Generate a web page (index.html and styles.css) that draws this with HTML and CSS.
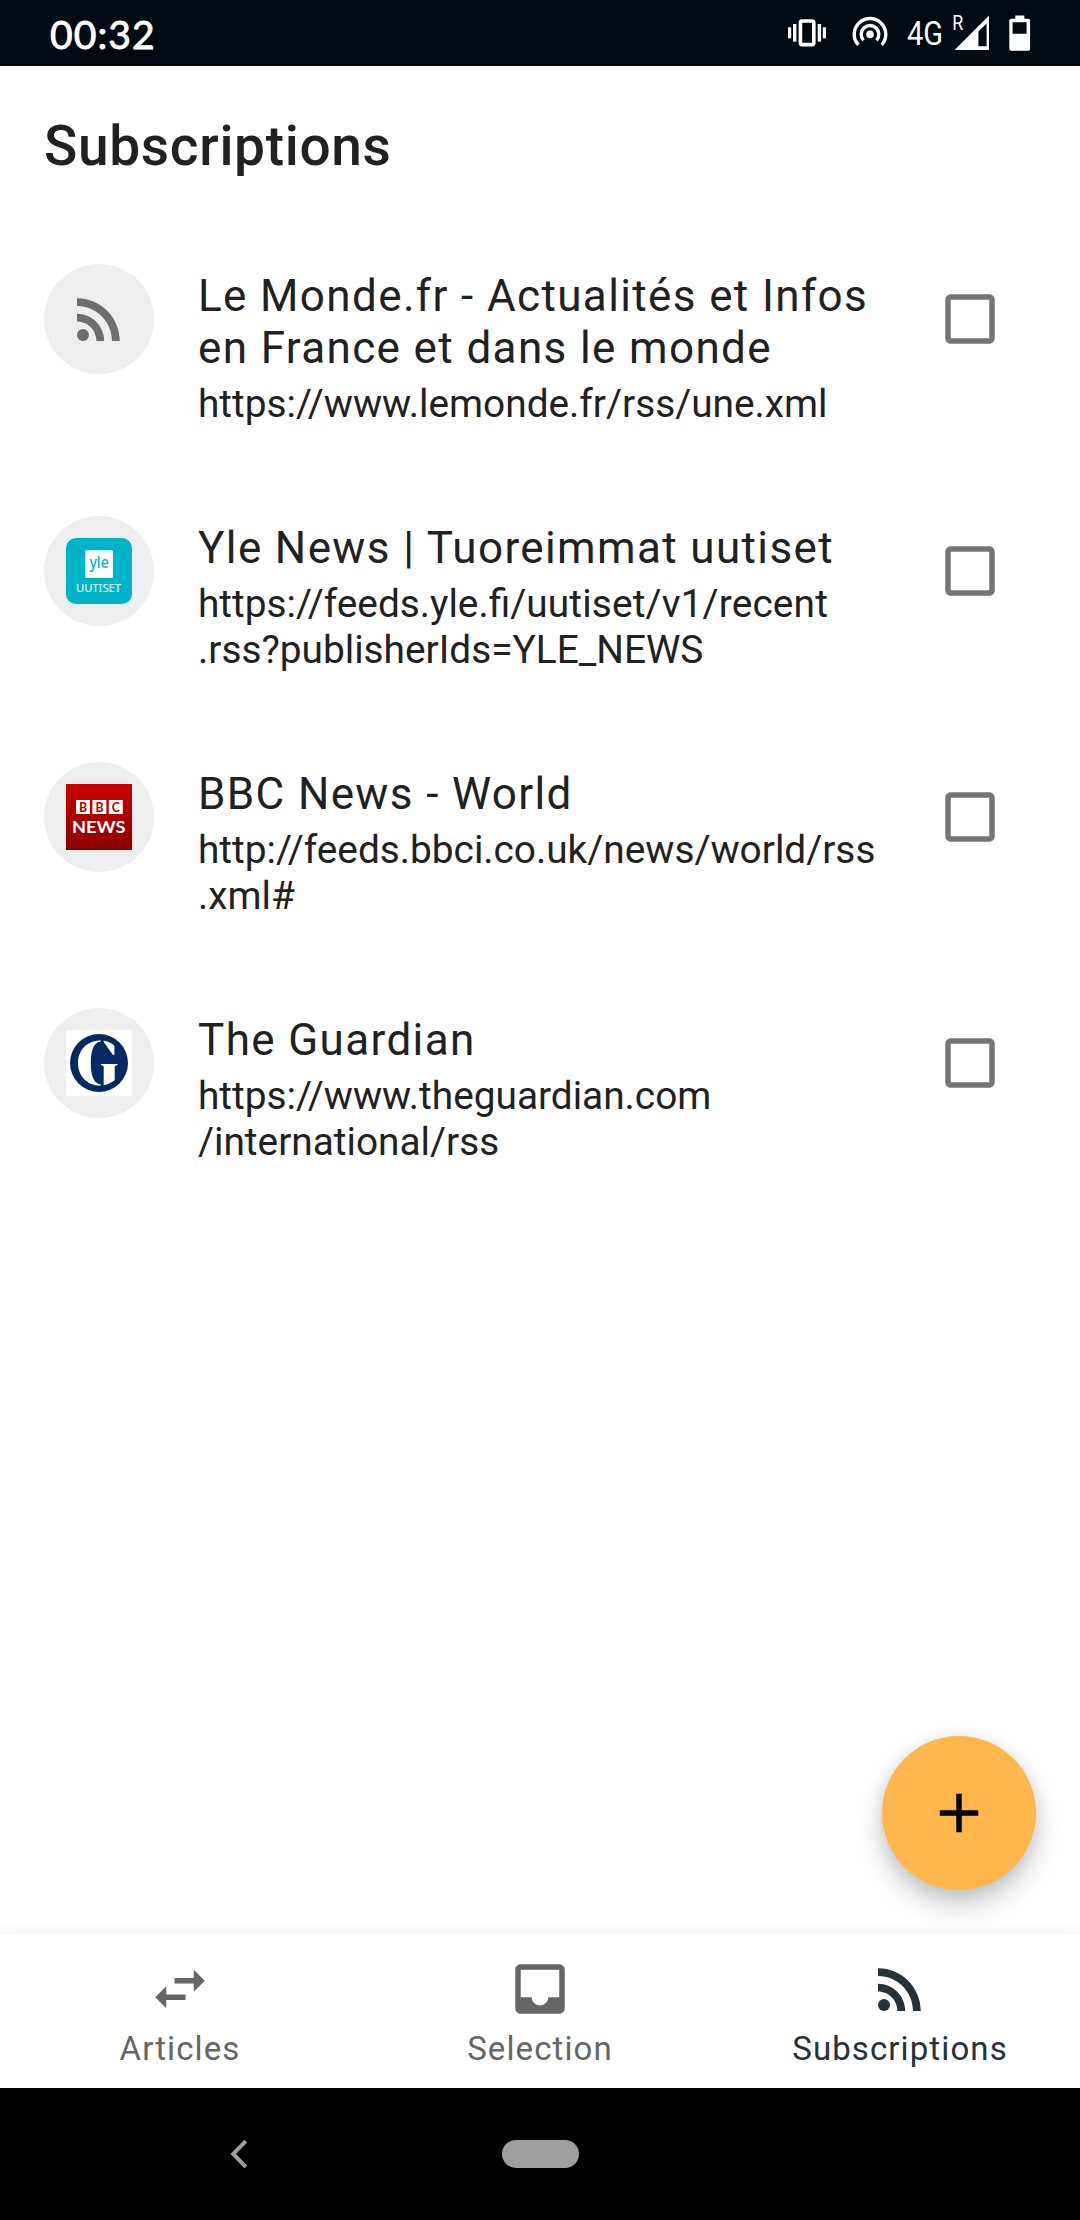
FILE: index.html
```html
<!DOCTYPE html>
<html lang="en">
<head>
<meta charset="utf-8">
<title>Subscriptions</title>
<link rel="stylesheet" href="styles.css">
</head>
<body>
<svg class="symbols" width="0" height="0">
  <symbol id="rss" viewBox="0 0 24 24">
    <circle cx="6.18" cy="17.82" r="2.18"/>
    <path d="M4 4.44v2.83c7.03 0 12.73 5.7 12.73 12.73h2.83c0-8.59-6.97-15.56-15.56-15.56zm0 5.66v2.83c3.9 0 7.07 3.17 7.07 7.07h2.83c0-5.47-4.43-9.9-9.9-9.9z"/>
  </symbol>
  <symbol id="checkbox" viewBox="0 0 24 24">
    <path d="M19 5v14H5V5h14m0-2H5c-1.1 0-2 .9-2 2v14c0 1.1.9 2 2 2h14c1.1 0 2-.9 2-2V5c0-1.1-.9-2-2-2z"/>
  </symbol>
</svg>
<div class="screen">
  <header class="status-bar">
    <span class="clock">00:32</span>
    <svg class="status-icons" width="250" height="66" viewBox="784 0 250 66">
      <g fill="#fff">
        <rect x="800.4" y="21" width="13.4" height="23.6" rx="1.6" fill="none" stroke="#fff" stroke-width="3.6"/>
        <rect x="788" y="27.3" width="3.2" height="11"/>
        <rect x="793" y="24" width="3.4" height="17.6"/>
        <rect x="817.7" y="24" width="3.4" height="17.6"/>
        <rect x="822.8" y="27.3" width="3.2" height="11"/>
        <circle cx="870" cy="34.4" r="3.8"/>
        <path d="M863.5 40.3a8.8 8.8 0 1 1 13 0M858.3 44.9a15.8 15.8 0 1 1 23.4 0" fill="none" stroke="#fff" stroke-width="3.4"/>
        <text class="network" x="907" y="44.6" font-size="34" textLength="36" lengthAdjust="spacingAndGlyphs">4G</text>
        <text class="network" x="952.3" y="30" font-size="21" textLength="11" lengthAdjust="spacingAndGlyphs">R</text>
        <path fill-rule="evenodd" d="M954.5 50L989 15.5V50zM978.4 46.3H986.6V23.6L978.4 31.5z"/>
        <path fill-rule="evenodd" d="M1015.3 15.4h9v3.3h3.9q1.9 0 1.9 1.9v28.2q0 1.9-1.9 1.9h-17q-1.9 0-1.9-1.9V20.6q0-1.9 1.9-1.9h4.1zM1012.6 22.2v11.6h14V22.2z"/>
      </g>
    </svg>
  </header>

  <h1 class="title">Subscriptions</h1>

  <main class="content">
    <ul class="feeds">
      <li class="feed">
        <div class="avatar"><svg class="icon" viewBox="0 0 24 24"><use href="#rss"/></svg></div>
        <div class="feed-text">
          <p class="feed-name">Le Monde.fr - Actualités et Infos<br>en France et dans le monde</p>
          <p class="feed-url">https://www.lemonde.fr/rss/une.xml</p>
        </div>
        <svg class="icon check"><use href="#checkbox"/></svg>
      </li>
      <li class="feed">
        <div class="avatar">
          <svg class="logo" viewBox="0 0 66 66">
            <rect width="66" height="66" rx="10" fill="#00b4c8"/>
            <rect x="19.3" y="12.3" width="27.6" height="27.8" rx="1" fill="#fff"/>
            <text class="logo-yle" x="23.4" y="30.3" font-size="16" textLength="19.4" lengthAdjust="spacingAndGlyphs">yle</text>
            <text class="logo-uutiset" x="10" y="54.4" font-size="11.6" textLength="45" lengthAdjust="spacingAndGlyphs">UUTISET</text>
          </svg>
        </div>
        <div class="feed-text">
          <p class="feed-name">Yle News | Tuoreimmat uutiset</p>
          <p class="feed-url">https://feeds.yle.fi<span class="url-path">/uutiset/v1/recent</span><br>.rss?publisherIds=YLE_NEWS</p>
        </div>
        <svg class="icon check"><use href="#checkbox"/></svg>
      </li>
      <li class="feed">
        <div class="avatar">
          <svg class="logo" viewBox="0 0 66 66">
            <defs><linearGradient id="bbc-red" x1="0" y1="0" x2="0" y2="1"><stop offset="0" stop-color="#cc0000"/><stop offset="1" stop-color="#8c0000"/></linearGradient></defs>
            <rect width="66" height="66" fill="url(#bbc-red)"/>
            <path fill="#fff" d="M10 16h14v14H10zM26.4 16h14v14h-14zM42.8 16h14v14h-14z"/>
            <g class="logo-bbc" font-size="12.4" text-anchor="middle">
              <text x="17.2" y="27.6">B</text><text x="33.6" y="27.6">B</text><text x="49.8" y="27.6">C</text>
            </g>
            <text class="logo-news" x="6" y="48.8" font-size="17.6" textLength="53.6" lengthAdjust="spacingAndGlyphs">NEWS</text>
          </svg>
        </div>
        <div class="feed-text">
          <p class="feed-name">BBC News - World</p>
          <p class="feed-url">http://feeds.bbci.co.uk/news/world/rss<br>.xml#</p>
        </div>
        <svg class="icon check"><use href="#checkbox"/></svg>
      </li>
      <li class="feed">
        <div class="avatar">
          <svg class="logo" viewBox="0 0 66 66">
            <rect width="66" height="66" fill="#fff"/>
            <circle cx="33" cy="33" r="29" fill="#052962"/>
            <path fill="#fff" d="M35 10.4C21 10.2 12 20 12 33s9 22.8 23 22.6v-1.2C28 54 24.8 46 24.8 33S28 12 35 11.6zM37.5 10.6c4 .6 8 2.6 10.9 5.1v9.4H47L38 12.6zM35 34h16.7v1l-3 1.3v14c-2.8 2.2-7 4.2-11 5V36.3L35 35z"/>
          </svg>
        </div>
        <div class="feed-text">
          <p class="feed-name">The Guardian</p>
          <p class="feed-url">https://www.theguardian.com<br>/international/rss</p>
        </div>
        <svg class="icon check"><use href="#checkbox"/></svg>
      </li>
    </ul>
    <button class="fab" aria-label="Add">
      <svg class="icon" viewBox="0 0 24 24"><path d="M19 13h-6v6h-2v-6H5v-2h6V5h2v6h6v2z"/></svg>
    </button>
  </main>

  <nav class="tabs">
    <a class="tab">
      <svg class="icon" viewBox="0 0 24 24"><path d="M6.99 11L3 15l3.99 4v-3H14v-2H6.99v-3zM21 9l-3.99-4v3H10v2h7.01v3L21 9z"/></svg>
      <span>Articles</span>
    </a>
    <a class="tab">
      <svg class="icon" viewBox="0 0 24 24"><path d="M19 3H4.99c-1.11 0-1.98.89-1.98 2L3 19c0 1.1.88 2 1.99 2H19c1.1 0 2-.9 2-2V5c0-1.11-.9-2-2-2zm0 12h-4c0 1.66-1.35 3-3 3s-3-1.34-3-3H4.99V5H19v10z"/></svg>
      <span>Selection</span>
    </a>
    <a class="tab active">
      <svg class="icon" viewBox="0 0 24 24"><use href="#rss"/></svg>
      <span>Subscriptions</span>
    </a>
  </nav>

  <footer class="system-nav">
    <svg class="back" width="20" height="32" viewBox="0 0 20 32"><path d="M16.8 3.2L4.2 16l12.6 12.8" fill="none" stroke="#9e9e9e" stroke-width="4"/></svg>
    <span class="home"></span>
  </footer>
</div>
</body>
</html>
```

FILE: styles.css
```css
* { box-sizing: border-box; }

body {
  margin: 0;
  background: #fff;
  color: #212121;
  font-family: Roboto, "Liberation Sans", sans-serif;
}

.symbols { position: absolute; }

.screen {
  display: flex;
  flex-direction: column;
  width: 1080px;
  height: 2220px;
}

.status-bar {
  display: flex;
  justify-content: space-between;
  align-items: center;
  height: 66px;
  padding: 0 46px 0 50px;
  background: #000a12;
  color: #fff;
}

.clock {
  padding-top: 2px;
  font-family: Lato, "Open Sans", sans-serif;
  font-size: 39px;
  line-height: 64px;
  letter-spacing: 1.1px;
  -webkit-text-stroke: 0.9px #fff;
}

.network { font-family: Roboto, sans-serif; }

.title {
  margin: 0;
  height: 154px;
  padding-left: 44px;
  font-size: 55px;
  font-weight: 500;
  line-height: 160px;
  letter-spacing: 0.0125em;
}

.content {
  display: flex;
  flex: 1;
  flex-direction: column;
  justify-content: space-between;
  padding: 44px 44px;
}

.feeds {
  display: flex;
  flex-direction: column;
  gap: 89px;
  margin: 0;
  padding: 0;
  list-style: none;
}

.feed {
  display: flex;
  align-items: flex-start;
}

.avatar {
  display: flex;
  align-items: center;
  justify-content: center;
  width: 110px;
  height: 110px;
  border-radius: 50%;
  background: #eee;
  color: #6e6e6e;
}

.icon {
  width: 66px;
  height: 66px;
  fill: currentColor;
}

.logo { width: 66px; height: 66px; }

.logo-yle { font-family: "Noto Sans", sans-serif; font-weight: 500; fill: #00b4c8; }
.logo-uutiset { font-family: "Noto Sans", sans-serif; fill: #fff; }
.logo-bbc { font-family: Lato, sans-serif; font-weight: 700; fill: #b00000; }
.logo-news { font-family: Lato, sans-serif; font-weight: 700; fill: #fff; }

.feed-text {
  flex: 1;
  padding: 6px 0 0 44px;
  white-space: nowrap;
}

.feed-name {
  margin: 0 0 7px;
  font-size: 44px;
  line-height: 52px;
  letter-spacing: 0.03125em;
}

.feed-url {
  margin: 0;
  font-size: 38.8px;
  line-height: 46px;
}

.url-path { letter-spacing: 0.15px; }

.check {
  margin: 22px 33px 0 0;
  color: #757575;
}

.fab {
  display: flex;
  align-items: center;
  justify-content: center;
  align-self: flex-end;
  width: 154px;
  height: 154px;
  padding: 0;
  border: 0;
  border-radius: 50%;
  background: #ffb74d;
  color: #000;
  box-shadow: 0 14px 28px rgba(0, 0, 0, 0.22), 0 2px 14px rgba(0, 0, 0, 0.08);
}

.tabs {
  display: grid;
  grid-template-columns: repeat(3, 1fr);
  height: 154px;
  background: #fff;
  box-shadow: 0 -1px 14px rgba(0, 0, 0, 0.07);
}

.tab {
  display: flex;
  flex-direction: column;
  align-items: center;
  padding-top: 22px;
  color: #666;
  font-size: 33px;
  line-height: 40px;
  letter-spacing: 0.0333em;
}

.tab span { margin-top: 7px; }

.tab.active { color: #263238; }

.system-nav {
  display: grid;
  grid-template-columns: 502px 77px;
  align-items: center;
  height: 132px;
  background: #000;
}

.back { margin-left: 229px; }

.home {
  height: 28px;
  border-radius: 14px;
  background: #9e9e9e;
}
```
